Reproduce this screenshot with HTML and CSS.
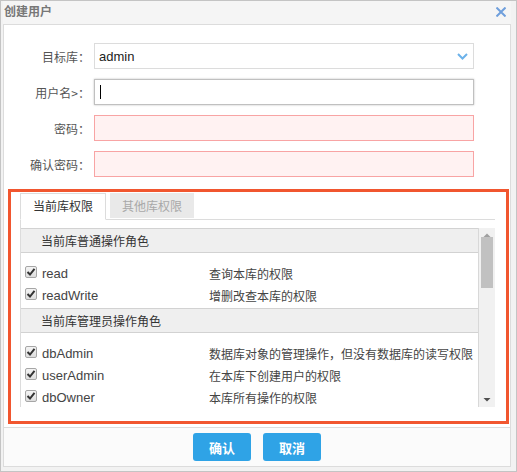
FILE: index.html
```html
<!DOCTYPE html>
<html lang="zh">
<head>
<meta charset="utf-8">
<title>创建用户</title>
<link rel="stylesheet" href="styles.css">
</head>
<body>
<div class="dialog">
  <div class="titlebar">
    <span class="title">创建用户</span>
    <svg class="close" width="10" height="10" viewBox="0 0 10 10"><path d="M1.2 1.2 L8.8 8.8 M8.8 1.2 L1.2 8.8" stroke="#6f9fdc" stroke-width="2" stroke-linecap="square"/></svg>
  </div>
  <div class="panel">
    <div class="form">
      <div class="row">
        <label class="label">目标库<span class="colon">：</span></label>
        <div class="input select"><span class="value">admin</span>
          <svg class="chev" width="11" height="7" viewBox="0 0 11 7"><path d="M1 1 L5.5 5.5 L10 1" fill="none" stroke="#6cb2ea" stroke-width="2"/></svg>
        </div>
      </div>
      <div class="row">
        <label class="label">用户名&gt;<span class="colon">：</span></label>
        <div class="input focus"><span class="caret"></span></div>
      </div>
      <div class="row">
        <label class="label">密码<span class="colon">：</span></label>
        <div class="input error"></div>
      </div>
      <div class="row">
        <label class="label">确认密码<span class="colon">：</span></label>
        <div class="input error"></div>
      </div>
    </div>
    <div class="highlight">
      <div class="tabs">
        <div class="tab active">当前库权限</div>
        <div class="tab">其他库权限</div>
      </div>
      <div class="pane">
        <div class="listwrap">
          <div class="list">
            <div class="ghead">当前库普通操作角色</div>
            <div class="group">
              <div class="item"><span class="cb"><svg width="10" height="10" viewBox="0 0 10 10"><path d="M1.5 5 L4 7.5 L8.5 1.8" fill="none" stroke="#333" stroke-width="2"/></svg></span><span class="name">read</span><span class="desc">查询本库的权限</span></div>
              <div class="item"><span class="cb"><svg width="10" height="10" viewBox="0 0 10 10"><path d="M1.5 5 L4 7.5 L8.5 1.8" fill="none" stroke="#333" stroke-width="2"/></svg></span><span class="name">readWrite</span><span class="desc">增删改查本库的权限</span></div>
            </div>
            <div class="ghead">当前库管理员操作角色</div>
            <div class="group">
              <div class="item"><span class="cb"><svg width="10" height="10" viewBox="0 0 10 10"><path d="M1.5 5 L4 7.5 L8.5 1.8" fill="none" stroke="#333" stroke-width="2"/></svg></span><span class="name">dbAdmin</span><span class="desc">数据库对象的管理操作，但没有数据库的读写权限</span></div>
              <div class="item"><span class="cb"><svg width="10" height="10" viewBox="0 0 10 10"><path d="M1.5 5 L4 7.5 L8.5 1.8" fill="none" stroke="#333" stroke-width="2"/></svg></span><span class="name">userAdmin</span><span class="desc">在本库下创建用户的权限</span></div>
              <div class="item"><span class="cb"><svg width="10" height="10" viewBox="0 0 10 10"><path d="M1.5 5 L4 7.5 L8.5 1.8" fill="none" stroke="#333" stroke-width="2"/></svg></span><span class="name">dbOwner</span><span class="desc">本库所有操作的权限</span></div>
            </div>
          </div>
          <div class="scrollbar">
            <svg class="arrow" width="16" height="14" viewBox="0 0 16 14"><path d="M4.5 9 L8 5.5 L11.5 9 Z" fill="#a0a0a0"/></svg>
            <div class="track"><div class="thumb"></div></div>
            <svg class="arrow" width="16" height="14" viewBox="0 0 16 14"><path d="M4.5 5 L8 8.5 L11.5 5 Z" fill="#505050"/></svg>
          </div>
        </div>
      </div>
    </div>
    <div class="footer">
      <button class="btn">确认</button>
      <button class="btn">取消</button>
    </div>
  </div>
</div>
</body>
</html>
```

FILE: styles.css
```css
* { box-sizing: border-box; }
html, body { margin: 0; padding: 0; }
body {
  width: 517px;
  height: 472px;
  font-family: "Liberation Sans", "Noto Sans CJK SC", sans-serif;
  color: #444;
}
.dialog {
  width: 517px;
  height: 472px;
  border: 1px solid #c4c4c4;
  background: #f2f2f2;
  padding: 0 5px 0 2px;
}
.titlebar {
  height: 23px;
  display: flex;
  align-items: center;
  justify-content: space-between;
  padding: 0 5px 0 1px;
  background: #f5f5f5;
}
.title {
  font-family: "Noto Sans CJK SC", sans-serif;
  font-size: 12px;
  font-weight: bold;
  color: #777;
  margin-top: -4px;
}
.close { margin-top: -1px; }
.panel {
  height: 443px;
  border: 1px solid #dcdcdc;
  background: #fff;
  display: flex;
  flex-direction: column;
}
.form {
  padding-top: 18px;
  display: flex;
  flex-direction: column;
  gap: 10px;
}
.row {
  display: flex;
  align-items: center;
  height: 26px;
}
.label {
  width: 86px;
  text-align: right;
  font-family: "Noto Sans CJK SC", sans-serif;
  font-size: 12px;
  color: #555;
  margin-right: 4px;
}
.colon { font-family: "Noto Sans CJK TC", sans-serif; }
.input {
  width: 380px;
  height: 26px;
  border: 1px solid #dcdcdc;
  display: flex;
  align-items: center;
  padding: 0 4px;
}
.select { justify-content: space-between; padding-right: 5px; }
.value { font-size: 13px; color: #222; }
.focus {
  border-color: #c0c0c0;
  box-shadow: 0 0 2px rgba(0,0,0,0.25);
}
.caret { display: block; width: 1px; height: 14px; background: #000; margin-left: 1px; }
.error { border-color: #f8a4a4; background: #fff2f2; }
.highlight {
  margin: 12px 1px 0 4px;
  height: 235px;
  border: 3px solid #f1562f;
  padding: 1px 11px 0 9px;
}
.tabs {
  display: flex;
  gap: 4px;
  height: 26px;
  align-items: flex-start;
}
.tab {
  height: 25px;
  line-height: 24px;
  padding: 0 11px;
  border: 1px solid transparent;
  font-family: "Noto Sans CJK SC", sans-serif;
  font-size: 12px;
  background: #e9e9e9;
  color: #a8a8a8;
}
.tab.active {
  height: 27px;
  padding: 0 12px;
  background: #fff;
  color: #333;
  border-color: #dcdcdc;
  border-bottom-color: #fff;
  position: relative;
  z-index: 1;
}
.pane {
  border-top: 1px solid #dcdcdc;
  border-left: 1px solid #dcdcdc;
  padding-top: 8px;
}
.listwrap {
  display: flex;
  height: 179px;
}
.list {
  flex: 1;
  overflow: hidden;
  border-right: 1px solid #d8d8d8;
}
.ghead {
  height: 25px;
  line-height: 23px;
  background: #efefef;
  border-top: 1px solid #d2d2d2;
  border-bottom: 1px solid #d2d2d2;
  padding-left: 20px;
  font-family: "Noto Sans CJK SC", sans-serif;
  font-size: 12px;
  color: #333;
}
.group { padding: 9px 0 2px; }
.item {
  height: 22px;
  display: flex;
  align-items: center;
  padding-left: 4px;
}
.cb {
  width: 12px;
  height: 12px;
  border: 1px solid #a6a6a6;
  border-radius: 2px;
  background: linear-gradient(#f4f4f4, #dedede);
  display: flex;
  align-items: center;
  justify-content: center;
  margin: -3px 5px 0 0;
}
.name {
  width: 167px;
  font-size: 13px;
  color: #444;
}
.desc {
  font-family: "Noto Sans CJK SC", sans-serif;
  font-size: 12px;
  color: #444;
}
.scrollbar {
  width: 16px;
  background: #f1f1f1;
  display: flex;
  flex-direction: column;
}
.arrow { display: block; flex: none; }
.track { flex: 1; padding: 0 2px 0 2px; }
.thumb {
  margin-top: -5px;
  height: 51px;
  background: #c1c1c1;
}
.footer {
  margin-top: 3px;
  flex: 1;
  border-top: 1px solid #dcdcdc;
  background: #fbfbfb;
  display: flex;
  justify-content: center;
  gap: 12px;
  padding-top: 5px;
}
.btn {
  width: 58px;
  height: 28px;
  border: none;
  border-radius: 3px;
  background: #2fa3e6;
  color: #fff;
  font-family: "Noto Sans CJK SC", sans-serif;
  font-size: 13px;
  font-weight: bold;
  padding: 0;
}
```
